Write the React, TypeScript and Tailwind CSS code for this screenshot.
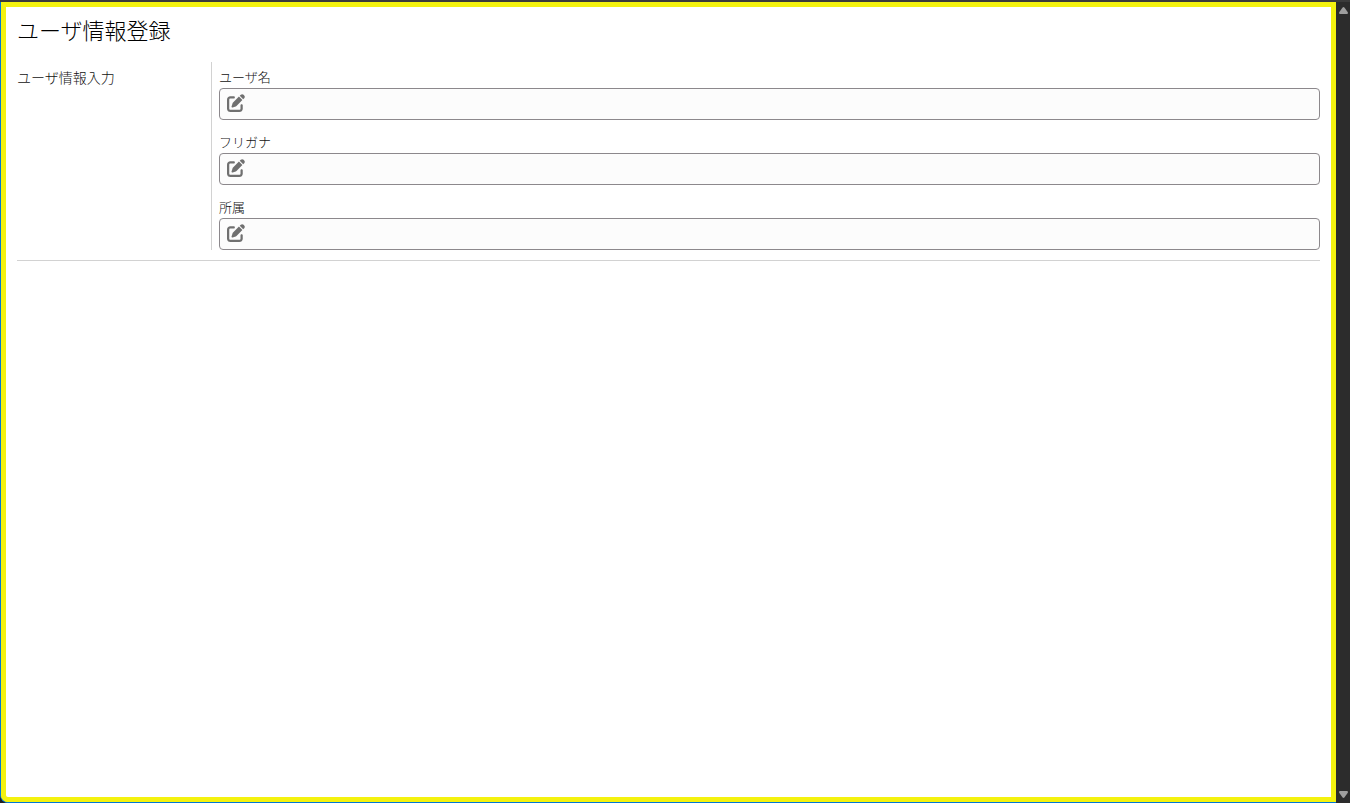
import { FaPenToSquare } from "react-icons/fa6";

const fields = [
  { id: "user-name", label: "ユーザ名" },
  { id: "user-kana", label: "フリガナ" },
  { id: "department", label: "所属" },
];

function Field({ id, label }: { id: string; label: string }) {
  return (
    <div className="flex flex-col">
      <label htmlFor={id} className="pb-[2px] text-[13px] leading-[18px] text-[#111111]">
        {label}
      </label>
      <div className="flex h-8 items-center gap-2 rounded-[4px] border border-[#8c888c] bg-[#fcfcfc] px-[7px] pb-[2px]">
        <FaPenToSquare className="size-[18px] shrink-0 text-[#707070]" aria-hidden="true" />
        <input
          id={id}
          type="text"
          className="min-w-0 flex-1 bg-transparent text-sm text-[#222222] outline-none"
        />
      </div>
    </div>
  );
}

function ScrollTrack() {
  return (
    <div className="flex w-[14px] shrink-0 flex-col items-center justify-between bg-[#2c2c2c] py-[5px]" aria-hidden="true">
      <svg width="9" height="7" viewBox="0 0 9 7" fill="#9f9f9f">
        <path d="M3.6 .5Q4.5-.3 5.4 .5L8.8 5.2Q9.3 7 8 7H1Q-.3 7 .2 5.2Z" />
      </svg>
      <svg width="9" height="7" viewBox="0 0 9 7" fill="#9f9f9f">
        <path d="M3.6 6.5Q4.5 7.3 5.4 6.5L8.8 1.8Q9.3 0 8 0H1Q-.3 0 .2 1.8Z" />
      </svg>
    </div>
  );
}

export default function App() {
  return (
    <div className="flex min-h-screen flex-col border-t-2 border-[#3b3b3b] bg-[#202020] font-['Noto_Sans_CJK_JP',sans-serif] font-light">
      <div className="flex flex-1">
        <div className="flex min-w-0 flex-1 rounded-bl-lg border-b border-l border-[#0078d4] bg-[#f4f20f]">
          <main className="min-w-0 flex-1 rounded-bl-[7px] border-[5px] border-[#f4f20f] bg-white pt-[6px] pr-[11px] pl-[11px]">
            <h1 className="text-[22px] leading-8 text-black">ユーザ情報登録</h1>
            <section className="mt-[17px] flex border-b border-[#d2d2d2] pb-[10px]">
              <h2 className="w-[194px] shrink-0 pt-[5px] text-[14px] leading-5 text-[#111111]">
                ユーザ情報入力
              </h2>
              <form className="flex min-w-0 flex-1 flex-col gap-[13px] border-l border-[#d2d2d2] pt-[6px] pl-[7px]">
                {fields.map((field) => (
                  <Field key={field.id} {...field} />
                ))}
              </form>
            </section>
          </main>
        </div>
        <ScrollTrack />
      </div>
    </div>
  );
}
